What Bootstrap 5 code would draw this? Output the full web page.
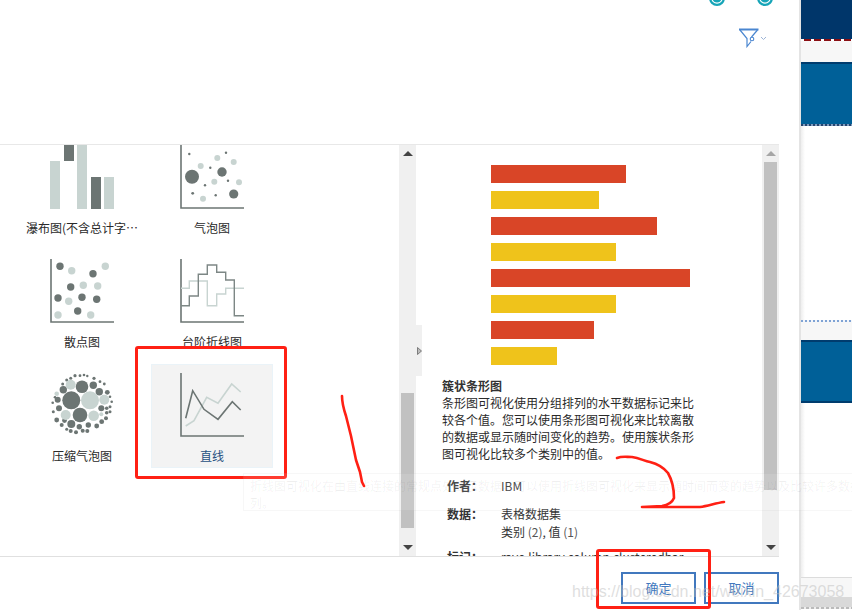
<!DOCTYPE html>
<html lang="zh">
<head>
<meta charset="utf-8">
<title>可视化</title>
<link href="https://cdn.jsdelivr.net/npm/bootstrap@5.3.0/dist/css/bootstrap.min.css" rel="stylesheet">
<style>
html,body{height:610px;width:852px;overflow:hidden;background:#fff}
body{position:relative;font-family:"Noto Sans CJK SC","Liberation Sans",sans-serif;font-size:12px;line-height:17px;color:#2a2a2a}
.dlg{width:799px;height:610px;padding-right:20px;flex:none}
.dlg-head{height:145px;flex:none;border-bottom:1px solid #e8e8e8}
.status-row{padding-right:6px;gap:32px}
.filter-row{margin-top:22px;padding-right:12px;gap:1px}
.mid-row{height:411px;flex:none}
.gallery{width:399px;flex:none;overflow:hidden}
.viz-grid{display:grid;grid-template-columns:repeat(2,122px);column-gap:8px;row-gap:10px;padding-left:21px;margin-top:-9px}
.viz-tile{height:104px;padding-top:9px;border:0}
.viz-tile svg{flex:none;display:block}
.viz-name{margin-top:10px;width:118px;text-align:center;white-space:nowrap;color:#2a2a2a}
.viz-picked{position:relative;z-index:2;background:#f3f3f3;outline:1px solid #eaf3f8;outline-offset:-1px}
.viz-picked .viz-name{color:#25507f}
.sb-track{width:17px;flex:none;background:#f0f0f0;height:411px}
.sb-btn{height:17px;flex:none}
.sb-up,.sb-down{width:0;height:0;border-left:5px solid transparent;border-right:5px solid transparent}
.sb-up{border-bottom:5px solid #444}
.sb-down{border-top:5px solid #444}
.sb-dim .sb-up{border-bottom-color:#a6a6a6}
.sb-thumb{width:13px;background:#c1c1c1;flex:none}
.thumb-l{height:135px;margin-top:231px}
.thumb-r{height:328px}
.sb-btn-end{margin-top:auto}
.detail{width:346px;flex:none;overflow:hidden;padding-top:20px}
.bar-list{padding-left:75px;gap:8px}
.hbar{height:18px}
.hbar-red{background:#d94527}
.hbar-yel{background:#efc31b}
.detail-text{padding-left:26px;margin-top:12px;width:280px}
.detail-title{font-weight:700;color:#333}
.meta{padding-left:5px;margin-top:15px}
.meta-row{display:flex;margin-bottom:10px}
.meta-row dt{width:54px;flex:none;font-weight:700;color:#333}
.meta-row dd{margin:0;color:#333;line-height:18px}
.meta-sm{margin-top:-3px}
.meta-val{color:#555}
.dlg-foot{height:54px;flex:none;border-top:1px solid #e0e0e0;padding-top:15px;gap:8px}
.btn.cmd-btn{width:75px;height:32px;padding:0;border:2px solid #4178be;border-radius:0;color:#4178be;background:#fff;font-size:13px;line-height:28px}
.edge{width:2px;flex:none;background:#e4e4e4}
.side{width:51px;flex:none;height:610px}
.s-navy{height:39px;background:#00366a}
.s-reddash{height:2px;background:repeating-linear-gradient(90deg,#fff 0 3px,#8a0f14 3px 10px)}
.s-pale{height:21px;background:#f7f7f7}
.s-pale2{height:18px;background:#f7f7f7}
.s-pale3{height:20px;background:#f7f7f7;border-top:1px solid #dcdcdc}
.s-line{height:2px;background:#003c6e}
.s-blue{height:60px;background:#006098}
.s-blue2{height:59px;background:#006098}
.s-dots{height:2px;background:repeating-linear-gradient(90deg,#26456f 0 2px,#7f9dbf 2px 4px)}
.s-white{height:194px;background:linear-gradient(90deg,#eee,#fff 4px)}
.s-white2{height:174px;background:linear-gradient(90deg,#eee,#fff 4px)}
.s-ltdots{height:2px;background:repeating-linear-gradient(90deg,#7fa3d4 0 2px,#f4f6fa 2px 4px)}
.s-grey{height:10px;background:#d9d9d9}
.s-dash{height:2px;background:repeating-linear-gradient(90deg,#bbb 0 3px,#eee 3px 5px)}
.collapse-tab{position:absolute;left:416px;top:325px;width:6px;height:51px;background:#f0f0f0;z-index:2}
.collapse-tab svg{display:block;margin-top:22px;margin-left:1px}
.box-gallery{position:absolute;left:135px;top:346px;width:152px;height:133px;background:#fff;border:3px solid #ff2014;border-radius:3px;z-index:1}
.tip-ghost{position:absolute;left:243px;top:473px;width:640px;height:38px;padding:3px 6px;border:1px solid rgba(0,0,0,.03);background:rgba(255,255,255,.12);color:rgba(0,0,0,.06);z-index:3}
.box-confirm{position:absolute;left:596px;top:549px;width:115px;height:60px;border:3px solid #ff2014;border-radius:3px;z-index:4}
.ink{position:absolute;left:0;top:0;z-index:4;pointer-events:none}
.wmark{position:absolute;left:572px;top:581px;font-family:"Liberation Sans",sans-serif;font-size:16px;line-height:22px;color:rgba(190,190,190,.5);white-space:nowrap;z-index:5}
</style>
</head>
<body class="d-flex">
<div class="dlg d-flex flex-column">
  <div class="dlg-head d-flex flex-column align-items-end">
    <div class="status-row d-flex">
      <svg width="16" height="6" viewBox="0 10 16 6"><circle cx="8" cy="8" r="8" fill="#17a5b8"/><circle cx="8" cy="8" r="5.8" fill="#fff"/><circle cx="8" cy="8" r="4.6" fill="#17a5b8"/></svg>
      <svg width="16" height="6" viewBox="0 10 16 6"><circle cx="8" cy="8" r="8" fill="#17a5b8"/><circle cx="8" cy="8" r="5.8" fill="#fff"/><circle cx="8" cy="8" r="4.6" fill="#17a5b8"/></svg>
    </div>
    <div class="filter-row d-flex align-items-center">
      <svg width="20" height="20" viewBox="0 0 20 20" fill="none" stroke="#4a86d0"><path d="M0 1.5H19.5" stroke-width="2"/><path d="M1 2L8 10.5V18.5L12 13.5M18.5 2L12.5 9" stroke-width="1.2"/><circle cx="13" cy="11" r="1.8" stroke-width="1.1" fill="#fff"/></svg>
      <svg width="7" height="5" viewBox="0 0 7 5" fill="none" stroke="#9db4d6"><path d="M1 1L3.5 3.5L6 1"/></svg>
    </div>
  </div>
  <div class="mid-row d-flex">
    <div class="gallery">
      <div class="viz-grid">
        <div class="viz-tile d-flex flex-column align-items-center">
          <svg width="64" height="64" viewBox="0 0 64 64"><g fill="#c8d4d1"><rect x="0" y="16" width="10" height="48"/><rect x="27" y="0" width="10" height="64"/><rect x="54" y="32" width="10" height="32"/></g><g fill="#6c7573"><rect x="14" y="0" width="10" height="16"/><rect x="41" y="32" width="10" height="32"/></g></svg>
          <div class="viz-name">瀑布图(不含总计字…</div>
        </div>
        <div class="viz-tile d-flex flex-column align-items-center">
          <svg width="64" height="64" viewBox="0 0 64 64"><path d="M1 0V63H64" fill="none" stroke="#6c7573" stroke-width="1.6"/><g fill="#c8d4d1"><circle cx="37.3" cy="13" r="3"/><circle cx="53.7" cy="17" r="3"/><circle cx="20.7" cy="21" r="3"/><circle cx="34.3" cy="36.7" r="3"/><circle cx="59" cy="37.3" r="3"/><circle cx="23" cy="53.7" r="3"/></g><g fill="#6c7573"><circle cx="9.3" cy="9" r="1.2"/><circle cx="46" cy="7.7" r="1.2"/><circle cx="30.3" cy="22.7" r="1.2"/><circle cx="42" cy="27" r="4.7"/><circle cx="12" cy="31.7" r="7"/><circle cx="48" cy="35.7" r="1.2"/><circle cx="25" cy="40.3" r="1.2"/><circle cx="12.7" cy="48.3" r="1.4"/><circle cx="35.7" cy="50.3" r="1.2"/><circle cx="53.7" cy="49" r="4.6"/></g></svg>
          <div class="viz-name">气泡图</div>
        </div>
        <div class="viz-tile d-flex flex-column align-items-center">
          <svg width="64" height="64" viewBox="0 0 64 64"><path d="M1 0V63H64" fill="none" stroke="#6c7573" stroke-width="1.6"/><g fill="#6c7573"><circle cx="10" cy="7.3" r="3.7"/><circle cx="43" cy="14.7" r="3.7"/><circle cx="20.7" cy="28" r="3.7"/><circle cx="8" cy="39" r="3.7"/><circle cx="32" cy="38.3" r="3.7"/><circle cx="46.7" cy="40.3" r="3.7"/><circle cx="27.7" cy="52" r="3.7"/></g><g fill="#c8d4d1"><circle cx="21.7" cy="11.7" r="3.7"/><circle cx="55.3" cy="7.3" r="3.7"/><circle cx="33.3" cy="26.3" r="3.7"/><circle cx="47.7" cy="27" r="3.7"/><circle cx="18.7" cy="42.3" r="3.7"/><circle cx="8" cy="56" r="3.7"/><circle cx="40.7" cy="56" r="3.7"/></g></svg>
          <div class="viz-name">散点图</div>
        </div>
        <div class="viz-tile d-flex flex-column align-items-center">
          <svg width="64" height="64" viewBox="0 0 64 64" fill="none"><path d="M1 0V63H64" stroke="#6c7573" stroke-width="1.6"/><path d="M1 29.3H9.3V22H27.3V46.7H36.7V35H45.7V29.3H64" stroke="#c8d4d1" stroke-width="1.4"/><path d="M1 46.7H9.3V37H18.3V15.3H27.3V6H36.7V13.3H45.7V21H54.3V56.7H64" stroke="#7d8785" stroke-width="1.4"/></svg>
          <div class="viz-name">台阶折线图</div>
        </div>
        <div class="viz-tile d-flex flex-column align-items-center">
          <svg width="64" height="64" viewBox="0 0 64 64"><g fill="#6c7573"><circle cx="21.3" cy="27.3" r="9"/><circle cx="30" cy="42" r="7.3"/><circle cx="32" cy="13.7" r="6.3"/><circle cx="43.3" cy="12.3" r="3.7"/><circle cx="49.3" cy="18.7" r="3.7"/><circle cx="13.3" cy="16.7" r="3.7"/><circle cx="7.7" cy="26.7" r="3"/><circle cx="9" cy="35.3" r="3"/><circle cx="51.3" cy="35.3" r="3"/><circle cx="21.3" cy="51" r="4"/><circle cx="25" cy="2.7" r="1.6"/><circle cx="30" cy="2.7" r="1.4"/><circle cx="34" cy="2" r="1.3"/><circle cx="37.3" cy="3" r="1.2"/><circle cx="44" cy="5.3" r="1.6"/><circle cx="50" cy="8.7" r="1.4"/><circle cx="54.3" cy="11" r="1.4"/><circle cx="57.3" cy="19.3" r="2.4"/><circle cx="60" cy="23.7" r="1.3"/><circle cx="61.7" cy="28.7" r="1.3"/><circle cx="56.7" cy="35.3" r="1.8"/><circle cx="60" cy="33.7" r="1.5"/><circle cx="56.7" cy="39.7" r="1.8"/><circle cx="60" cy="38.7" r="1.5"/><circle cx="56" cy="45.3" r="2"/><circle cx="51.7" cy="48.7" r="2.4"/><circle cx="46.7" cy="53" r="2.4"/><circle cx="38.3" cy="52" r="2.7"/><circle cx="37.3" cy="58" r="2"/><circle cx="32.7" cy="57.7" r="2"/><circle cx="29.3" cy="53.7" r="2.7"/><circle cx="26" cy="59.3" r="2"/><circle cx="20.7" cy="58" r="2"/><circle cx="16.7" cy="56.3" r="1.5"/><circle cx="11.7" cy="52" r="2"/><circle cx="14.5" cy="47.5" r="2.4"/><circle cx="6.7" cy="47" r="2.4"/><circle cx="3.3" cy="38.7" r="1.5"/><circle cx="2.7" cy="29.7" r="1.3"/><circle cx="5" cy="24.3" r="1.3"/><circle cx="12.7" cy="11" r="1.5"/><circle cx="16.7" cy="7" r="1.5"/><circle cx="20.7" cy="5.3" r="1.5"/></g><g fill="#c8d4d1"><circle cx="40" cy="27.3" r="9"/><circle cx="20.7" cy="11.7" r="5"/><circle cx="15.7" cy="42" r="5"/><circle cx="43.7" cy="42.7" r="5.3"/><circle cx="54.3" cy="26.7" r="5"/><circle cx="6.7" cy="20.7" r="2.3"/><circle cx="51.3" cy="41.3" r="2"/></g></svg>
          <div class="viz-name">压缩气泡图</div>
        </div>
        <div class="viz-tile viz-picked d-flex flex-column align-items-center">
          <svg width="64" height="64" viewBox="0 0 64 64" fill="none"><path d="M1 0V63H64" stroke="#6c7573" stroke-width="1.6"/><path d="M5.7 53L14 47.7L26.7 24.3L38 30.3L51.7 11L60.7 19" stroke="#c8d4d1" stroke-width="1.6"/><path d="M5.7 45.3L12.7 17.7L24 36.3L38 46.3L52.3 28.7L60.7 37" stroke="#6c7573" stroke-width="1.6"/></svg>
          <div class="viz-name">直线</div>
        </div>
      </div>
    </div>
    <div class="sb-track d-flex flex-column align-items-center">
      <div class="sb-btn d-flex align-items-center"><div class="sb-up"></div></div>
      <div class="sb-thumb thumb-l"></div>
      <div class="sb-btn sb-btn-end d-flex align-items-center"><div class="sb-down"></div></div>
    </div>
    <div class="detail">
      <div class="bar-list d-flex flex-column">
        <div class="hbar hbar-red" style="width:135px"></div>
        <div class="hbar hbar-yel" style="width:108px"></div>
        <div class="hbar hbar-red" style="width:166px"></div>
        <div class="hbar hbar-yel" style="width:125px"></div>
        <div class="hbar hbar-red" style="width:199px"></div>
        <div class="hbar hbar-yel" style="width:125px"></div>
        <div class="hbar hbar-red" style="width:103px"></div>
        <div class="hbar hbar-yel" style="width:66px"></div>
      </div>
      <div class="detail-text">
        <div class="detail-title">簇状条形图</div>
        <div>条形图可视化使用分组排列的水平数据标记来比较各个值。您可以使用条形图可视化来比较离散的数据或显示随时间变化的趋势。使用簇状条形图可视化比较多个类别中的值。</div>
        <dl class="meta mb-0">
          <div class="meta-row"><dt>作者：</dt><dd class="meta-val">IBM</dd></div>
          <div class="meta-row"><dt>数据：</dt><dd>表格数据集<br>类别 <span class="meta-val">(2)</span>, 值 <span class="meta-val">(1)</span></dd></div>
          <div class="meta-row meta-sm"><dt>标记：</dt><dd class="meta-val text-nowrap">rave.library.column.clusteredbar</dd></div>
        </dl>
      </div>
    </div>
    <div class="sb-track sb-dim d-flex flex-column align-items-center">
      <div class="sb-btn d-flex align-items-center"><div class="sb-up"></div></div>
      <div class="sb-thumb thumb-r"></div>
      <div class="sb-btn sb-btn-end d-flex align-items-center"><div class="sb-down"></div></div>
    </div>
  </div>
  <div class="dlg-foot d-flex justify-content-end">
    <button type="button" class="btn cmd-btn">确定</button>
    <button type="button" class="btn cmd-btn">取消</button>
  </div>
</div>
<div class="edge"></div>
<div class="side d-flex flex-column">
  <div class="s-navy"></div><div class="s-reddash"></div><div class="s-pale"></div><div class="s-line"></div><div class="s-blue"></div><div class="s-dots"></div>
  <div class="s-white"></div><div class="s-ltdots"></div><div class="s-pale2"></div><div class="s-line"></div><div class="s-blue2"></div><div class="s-line"></div>
  <div class="s-white2"></div><div class="s-pale3"></div><div class="s-grey"></div><div class="s-dash"></div>
</div>

<div class="collapse-tab"><svg width="5" height="8" viewBox="0 0 5 8"><path d="M.5 .5L4.5 4L.5 7.5Z" fill="#bbb" stroke="#666" stroke-width=".8"/></svg></div>
<div class="box-gallery"></div>
<div class="tip-ghost">折线图可视化在由直线连接的常规点处显示数据。可以使用折线图可视化来显示随时间而变的趋势以及比较许多数据系列。</div>
<div class="box-confirm"></div>
<svg class="ink" width="852" height="610" viewBox="0 0 852 610" fill="none" stroke="#ff2014" stroke-width="2.6" stroke-linecap="round" stroke-linejoin="round">
  <path d="M342 396C342 404 344 410 346 416L351 436L356 460L360 472L362 482L364 486"/>
  <path d="M617 458C622 456 626 457 632 457C640 458 644 461 650 462C658 464 664 468 668 473C672 480 674 490 674 498C672 503 668 505 662 506L642 507L700 507C708 506 716 503 724 502"/>
</svg>
<div class="wmark">https://blog.csdn.net/weixin_42673058</div>
<script src="https://cdn.jsdelivr.net/npm/bootstrap@5.3.0/dist/js/bootstrap.bundle.min.js"></script>
</body>
</html>
